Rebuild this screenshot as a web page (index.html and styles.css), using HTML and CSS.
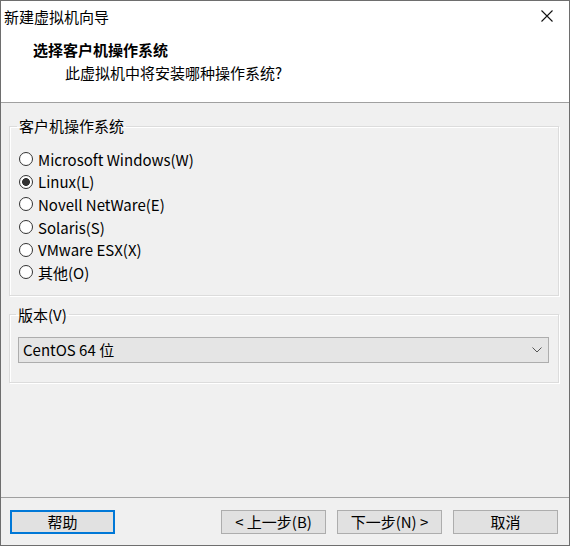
FILE: index.html
```html
<!DOCTYPE html>
<html lang="zh-CN">
<head>
    <meta charset="UTF-8">
    <meta name="viewport" content="width=device-width, initial-scale=1.0">
    <title>新建虚拟机向导</title>
    <link rel="stylesheet" href="styles.css">
</head>
<body>
    <div class="window">
        <div class="titlebar">
            <span class="title">新建虚拟机向导</span>
            <svg class="close" width="12" height="12" viewBox="0 0 12 12">
                <path d="M0.5 0.5 L11.5 11.5 M11.5 0.5 L0.5 11.5" stroke="#111" stroke-width="1.1" fill="none"/>
            </svg>
        </div>
        <div class="header">
            <div class="header-title">选择客户机操作系统</div>
            <div class="header-sub">此虚拟机中将安装哪种操作系统?</div>
        </div>
        <div class="content">
            <fieldset class="group">
                <legend>客户机操作系统</legend>
                <div class="radio-list">
                    <div class="radio-row"><span class="radio"></span>Microsoft Windows(W)</div>
                    <div class="radio-row"><span class="radio checked"></span>Linux(L)</div>
                    <div class="radio-row"><span class="radio"></span>Novell NetWare(E)</div>
                    <div class="radio-row"><span class="radio"></span>Solaris(S)</div>
                    <div class="radio-row"><span class="radio"></span>VMware ESX(X)</div>
                    <div class="radio-row"><span class="radio"></span>其他(O)</div>
                </div>
            </fieldset>
            <fieldset class="group version">
                <legend>版本(V)</legend>
                <div class="combo">
                    <span>CentOS 64 位</span>
                    <svg width="10" height="6" viewBox="0 0 10 6">
                        <path d="M0.5 0.5 L5 5 L9.5 0.5" stroke="#555" stroke-width="1" fill="none"/>
                    </svg>
                </div>
            </fieldset>
        </div>
        <div class="footer">
            <button type="button" class="btn default">帮助</button>
            <div class="spacer"></div>
            <button type="button" class="btn">&lt; 上一步(B)</button>
            <button type="button" class="btn">下一步(N) &gt;</button>
            <button type="button" class="btn">取消</button>
        </div>
    </div>
</body>
</html>
```

FILE: styles.css
```css
body {
    margin: 0;
    padding: 0;
    font-family: "Noto Sans CJK SC", "Noto Sans", sans-serif;
    font-size: 15px;
    color: #000;
}
.window {
    width: 570px;
    height: 546px;
    box-sizing: border-box;
    border: 1px solid #6e6e6e;
    display: flex;
    flex-direction: column;
    background-color: #f0f0f0;
}
.titlebar {
    height: 32px;
    background-color: #fff;
    display: flex;
    align-items: center;
    justify-content: space-between;
    padding: 0 16px 0 3px;
}
.title {
    line-height: 20px;
}
.close {
    margin-top: -2px;
}
.header {
    height: 70px;
    box-sizing: border-box;
    background-color: #fff;
    border-bottom: 1px solid #a0a0a0;
    padding: 7px 0 0 32px;
}
.header-title {
    font-weight: bold;
    line-height: 20px;
}
.header-sub {
    line-height: 20px;
    margin-top: 3px;
    padding-left: 32px;
}
.content {
    flex: 1;
    padding: 13px 10px 0 8px;
}
.group {
    margin: 0;
    padding: 0 9px 11px 9px;
    border: 1px solid #dcdcdc;
    box-shadow: inset 1px 1px 0 #fff, 1px 1px 0 #fff;
}
.group legend {
    padding: 0 2px;
    margin-left: -2px;
    line-height: 20px;
}
.radio-list {
    padding-top: 12px;
}
.radio-row {
    height: 22.6px;
    display: flex;
    align-items: center;
}
.radio {
    width: 14px;
    height: 14px;
    box-sizing: border-box;
    border: 1px solid #333;
    border-radius: 50%;
    background-color: #fff;
    margin-right: 5px;
}
.radio.checked {
    background: radial-gradient(circle, #333 0 3.6px, #fff 4.2px);
}
.version {
    margin-top: 9px;
    padding: 0 9px 19px 8px;
}
.combo {
    margin-top: 12px;
    height: 26px;
    box-sizing: border-box;
    border: 1px solid #adadad;
    background-color: #e5e5e5;
    display: flex;
    align-items: center;
    justify-content: space-between;
    padding: 0 6px 0 4px;
}
.footer {
    height: 48px;
    box-sizing: border-box;
    border-top: 1px solid #a0a0a0;
    display: flex;
    align-items: flex-start;
    gap: 11px;
    padding: 12px 11px 0 9px;
}
.spacer {
    flex: 1;
}
.btn {
    width: 105px;
    height: 24px;
    box-sizing: border-box;
    border: 1px solid #adadad;
    background-color: #e1e1e1;
    font-family: "Noto Sans CJK SC", "Noto Sans", sans-serif;
    font-size: 15px;
    color: #000;
    padding: 0;
    line-height: 20px;
}
.btn.default {
    border: 2px solid #0078d7;
}
```
